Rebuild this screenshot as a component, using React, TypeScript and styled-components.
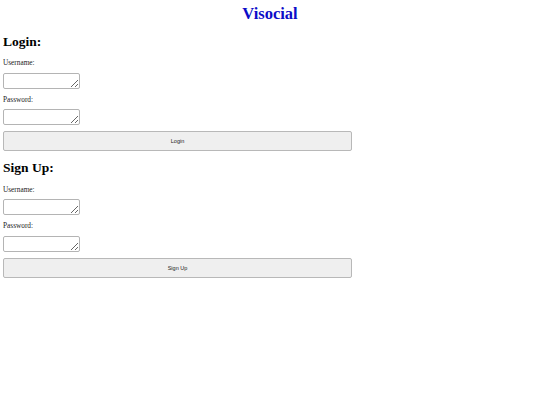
import styled, { createGlobalStyle } from "styled-components";

const GlobalStyle = createGlobalStyle`
  body {
    margin: 3px;
    background: #fff;
    font-family: "Liberation Serif", "Times New Roman", serif;
    color: #000;
  }
`;

const Title = styled.h1`
  margin: 0;
  padding-top: 1px;
  font-size: 16.5px;
  line-height: 20px;
  text-align: center;
  color: #0c0cc8;
`;

const Section = styled.section`
  display: flex;
  flex-direction: column;
  align-items: flex-start;
`;

const Heading = styled.h2<{ $top: number }>`
  margin: ${({ $top }) => $top}px 0 0;
  font-size: 13.5px;
  line-height: 16px;
`;

const Label = styled.label<{ $top: number }>`
  display: block;
  margin-top: ${({ $top }) => $top}px;
  font-size: 7.3px;
  line-height: 8px;
  color: #222;
`;

const Field = styled.textarea<{ $top: number }>`
  box-sizing: border-box;
  margin: ${({ $top }) => $top}px 0 0;
  width: 77px;
  height: 16px;
  padding: 1px;
  border: 1px solid #b4b4b4;
  border-radius: 2px;
  font-size: 7px;
  resize: both;
`;

const Button = styled.button`
  box-sizing: border-box;
  margin-top: 6px;
  width: 349px;
  height: 20px;
  padding: 0;
  border: 1px solid #b8b8b8;
  border-radius: 2px;
  background: #efefef;
  font-family: "Liberation Sans", Arial, sans-serif;
  font-size: 5.5px;
  color: #222;
`;

export default function App() {
  return (
    <>
      <GlobalStyle />
      <Title>Visocial</Title>
      <Section>
        <Heading $top={10}>Login:</Heading>
        <Label $top={9}>Username:</Label>
        <Field $top={6} />
        <Label $top={7}>Password:</Label>
        <Field $top={5} />
        <Button>Login</Button>
      </Section>
      <Section>
        <Heading $top={9}>Sign Up:</Heading>
        <Label $top={10}>Username:</Label>
        <Field $top={5} />
        <Label $top={7}>Password:</Label>
        <Field $top={6} />
        <Button>Sign Up</Button>
      </Section>
    </>
  );
}
